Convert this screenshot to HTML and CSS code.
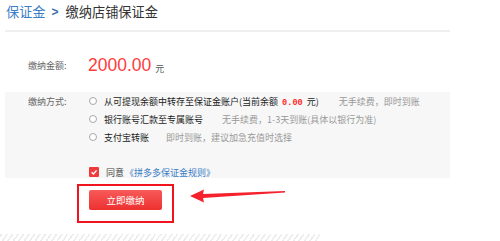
FILE: index.html
```html
<!DOCTYPE html>
<html lang="zh-CN">
<head>
<meta charset="utf-8">
<title>缴纳店铺保证金</title>
<link rel="stylesheet" href="styles.css">
</head>
<body>
<div class="page">
  <div class="crumbs">
    <span class="crumb-link">保证金</span><span class="crumb-sep">&gt;</span><span class="crumb-cur">缴纳店铺保证金</span>
  </div>
  <div class="amount-row">
    <span class="label">缴纳金额:</span>
    <span class="amount">2000.00</span>
    <span class="unit">元</span>
  </div>
  <div class="pay-box">
    <div class="opt-row">
      <span class="label">缴纳方式:</span>
      <span class="radio"></span>
      <span class="opt-main">从可提现余额中转存至保证金账户(当前余额 <b class="bal">0.00</b> 元)</span>
      <span class="opt-note note-1">无手续费，即时到账</span>
    </div>
    <div class="opt-row">
      <span class="label"></span>
      <span class="radio"></span>
      <span class="opt-main">银行账号汇款至专属账号</span>
      <span class="opt-note note-2">无手续费，1-3天到账(具体以银行为准)</span>
    </div>
    <div class="opt-row">
      <span class="label"></span>
      <span class="radio"></span>
      <span class="opt-main">支付宝转账</span>
      <span class="opt-note note-3">即时到账，建议加急充值时选择</span>
    </div>
    <div class="agree-row">
      <span class="label"></span>
      <span class="check"><svg viewBox="0 0 10 10" width="10" height="10"><path d="M2.6 5.2 L4.4 7 L7.6 3.4" fill="none" stroke="#fff" stroke-width="1.4"/></svg></span>
      <span class="agree">同意</span><span class="rules">《拼多多保证金规则》</span>
    </div>
  </div>
  <div class="submit-wrap">
    <div class="highlight">
      <button class="submit">立即缴纳</button>
    </div>
    <svg class="arrow" width="100" height="16" viewBox="0 0 100 16">
      <polygon points="2,8 16,1.5 15,6 97,3 97,4.5 15,10 16,14.5" fill="#f5222d"/>
    </svg>
  </div>
  <div class="hatch"></div>
</div>
</body>
</html>
```
FILE: styles.css
```css
* { box-sizing: border-box; margin: 0; padding: 0; }
html, body { background: #fff; }
body {
  width: 500px;
  height: 241px;
  overflow: hidden;
  font-family: "Noto Sans CJK SC", "Liberation Sans", sans-serif;
  color: #333;
}
.page {
  padding-left: 5px;
  width: 450px;
}
.crumbs {
  height: 32px;
  border-bottom: 2px solid #efefef;
  display: flex;
  align-items: center;
  padding-left: 1px;
  padding-bottom: 7px;
  font-size: 13.2px;
  line-height: 20px;
}
.crumb-link { color: #3a7ec6; }
.crumb-sep { color: #3a6ca8; margin: 0 7px 0 6px; font-family: "Liberation Sans", sans-serif; font-size: 12px; font-weight: bold; }
.crumb-cur { color: #333; }

.label {
  width: 84px;
  padding-left: 23px;
  font-size: 9px;
  color: #666;
  flex: none;
}
.amount-row {
  margin-top: 21px;
  height: 24px;
  display: flex;
  align-items: center;
}
.amount {
  font-family: "Liberation Sans", sans-serif;
  font-size: 17.5px;
  color: #ff3c3c;
  margin-left: -1px;
}
.unit {
  font-size: 9px;
  color: #555;
  margin-left: 4px;
  margin-top: 6px;
}

.pay-box {
  margin-top: 15px;
  height: 86px;
  background: #f7f7f7;
}
.opt-row {
  height: 18px;
  display: flex;
  align-items: center;
  font-size: 9px;
}
.radio {
  width: 8px;
  height: 8px;
  border: 1px solid #a8a8a8;
  border-radius: 50%;
  background: #fff;
  flex: none;
  margin-right: 7px;
}
.opt-main { color: #222; white-space: nowrap; }
.bal {
  color: #ff2a2a;
  font-family: "Liberation Mono", monospace;
  font-size: 8.6px;
  font-weight: bold;
  margin: 0 2px;
}
.opt-note { color: #999; white-space: nowrap; }
.note-1 { margin-left: 20px; }
.note-2 { margin-left: 19px; }
.note-3 { margin-left: 17px; }

.agree-row {
  margin-top: 20px;
  height: 12px;
  display: flex;
  align-items: center;
  font-size: 9px;
}
.check {
  width: 10px;
  height: 10px;
  background: #ee3b3b;
  border-radius: 1px;
  display: flex;
  flex: none;
  margin-right: 7px;
}
.agree { color: #444; }
.rules { color: #3a7ec6; margin-left: 1px; }

.submit-wrap {
  position: relative;
  margin-top: 6px;
  height: 39px;
}
.highlight {
  margin-left: 72px;
  width: 97px;
  height: 39px;
  border: 2px solid #f0141e;
  padding: 4px 10px 0 10px;
}
.submit {
  display: block;
  width: 73px;
  height: 20px;
  border: none;
  border-radius: 2px;
  background: linear-gradient(#f85a5a, #ee3030);
  color: #fff;
  font-family: "Noto Sans CJK SC", sans-serif;
  font-size: 9.5px;
}
.arrow {
  position: absolute;
  left: 183px;
  top: 4px;
}
.hatch {
  margin-top: 11px;
  margin-left: -5px;
  width: 320px;
  height: 7px;
  background: repeating-linear-gradient(-55deg, #fff 0 3px, #ececec 3px 4.5px);
}
```
